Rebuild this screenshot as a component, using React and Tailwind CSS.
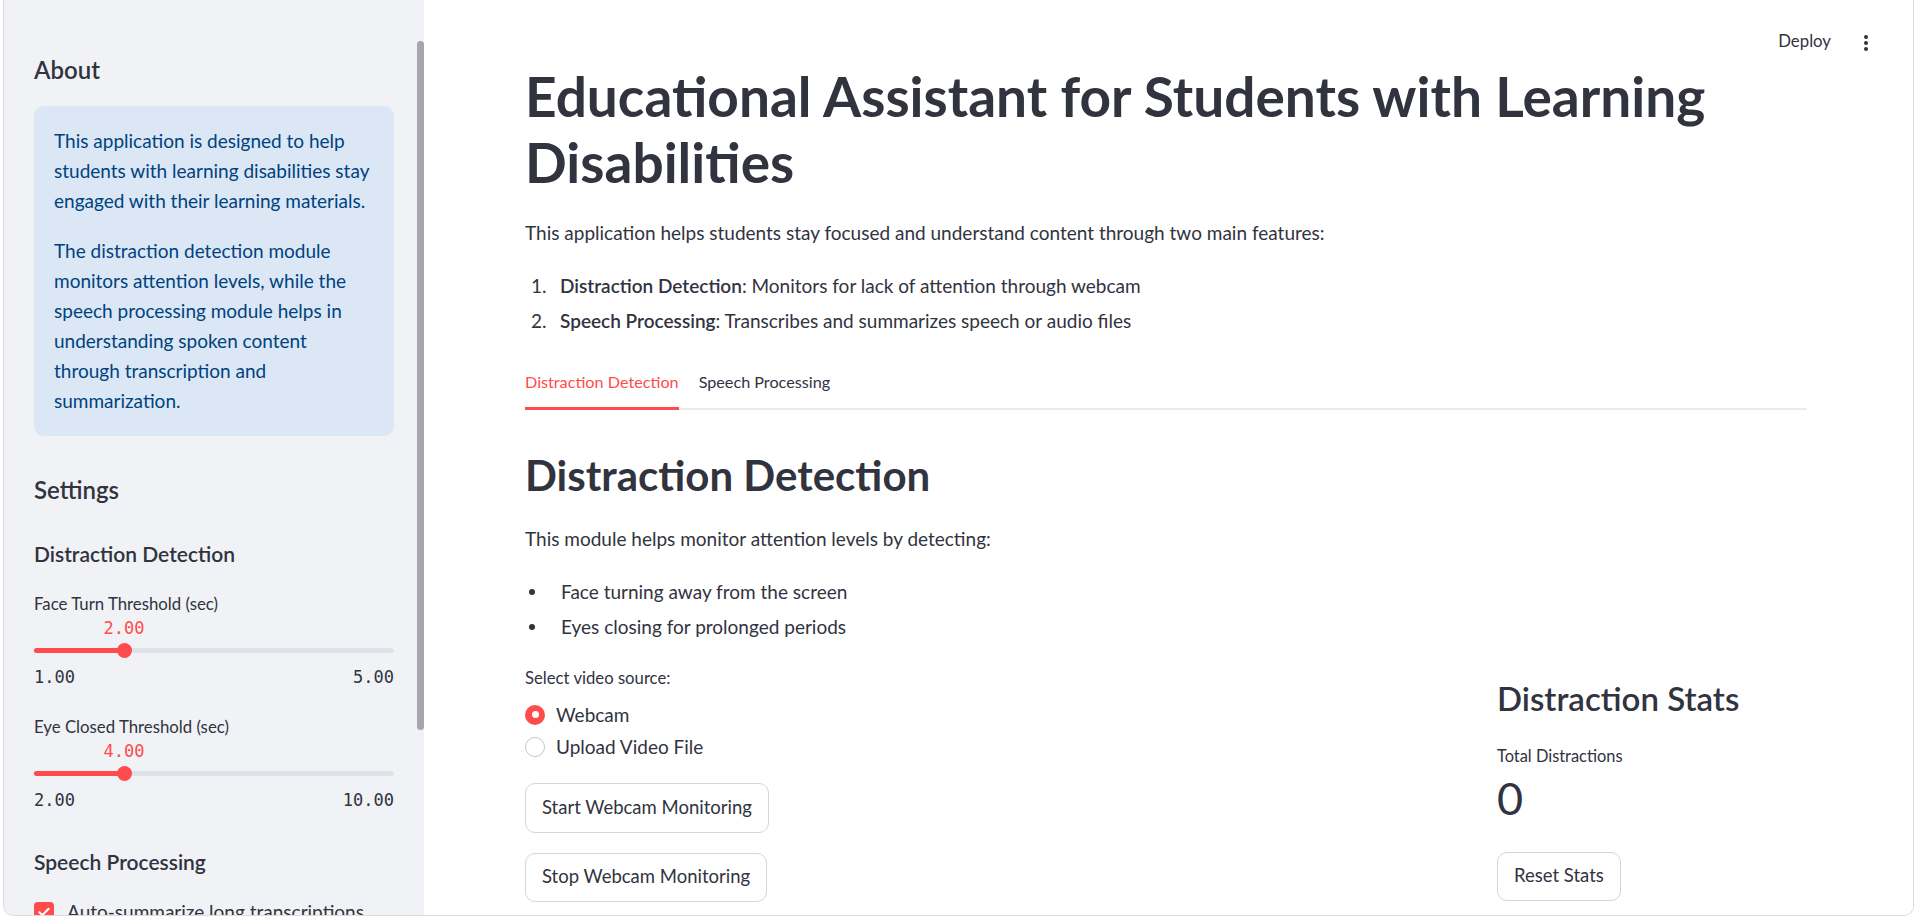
import React from "react";

const SANS = "[font-family:Lato,'Noto_Sans',sans-serif]";
const MONO = "[font-family:'DejaVu_Sans_Mono',monospace]";

function Slider({ label, value, min, max, pct }) {
  return (
    <div>
      <div className="text-[16.8px] leading-[21px] text-[#31333f]">{label}</div>
      <div className="relative h-[53.3px]">
        <div className="absolute left-0 right-0 top-[33.8px] h-[5px] rounded-full bg-[#dfe2e9]" />
        <div
          className="absolute left-0 top-[33.8px] h-[5px] rounded-full bg-[#ff4b4b]"
          style={{ width: pct }}
        />
        <div
          className="absolute top-[28.8px] -ml-[7.5px] h-[15px] w-[15px] rounded-full bg-[#ff4b4b]"
          style={{ left: pct }}
        />
        <div
          className={`absolute top-[4.3px] -translate-x-1/2 ${MONO} text-[17px] leading-[20px] text-[#ff4b4b]`}
          style={{ left: pct }}
        >
          {value}
        </div>
      </div>
      <div className={`flex justify-between ${MONO} text-[17px] leading-[20px] text-[#31333f]`}>
        <span>{min}</span>
        <span>{max}</span>
      </div>
    </div>
  );
}

function Sidebar() {
  return (
    <aside className="relative h-full w-[420px] shrink-0 bg-[#f0f2f6]">
      <div className="px-[30px] pt-[55.3px]">
        <h3 className="text-[24px] font-semibold leading-[30px] text-[#31333f]">About</h3>
        <div className="mt-[20.7px] whitespace-nowrap rounded-[10px] bg-[#dbe7f4] p-[20px] text-[19px] leading-[30px] text-[#004280]">
          <p>
            This application is designed to help
            <br />
            students with learning disabilities stay
            <br />
            engaged with their learning materials.
          </p>
          <p className="mt-[20px]">
            The distraction detection module
            <br />
            monitors attention levels, while the
            <br />
            speech processing module helps in
            <br />
            understanding spoken content
            <br />
            through transcription and
            <br />
            summarization.
          </p>
        </div>
        <h3 className="mt-[39.3px] text-[24px] font-semibold leading-[30px] text-[#31333f]">Settings</h3>
        <h4 className="mt-[34.5px] text-[21px] font-semibold leading-[27px] text-[#31333f]">
          Distraction Detection
        </h4>
        <div className="mt-[26px]">
          <Slider label="Face Turn Threshold (sec)" value="2.00" min="1.00" max="5.00" pct="25%" />
        </div>
        <div className="mt-[28.7px]">
          <Slider label="Eye Closed Threshold (sec)" value="4.00" min="2.00" max="10.00" pct="25%" />
        </div>
        <h4 className="mt-[37.8px] text-[21px] font-semibold leading-[27px] text-[#31333f]">
          Speech Processing
        </h4>
        <div className="mt-[22px] flex h-[30px] items-center gap-[13px]">
          <span className="flex h-[20px] w-[20px] items-center justify-center rounded-[4px] bg-[#ff4b4b]">
            <svg width="14" height="14" viewBox="0 0 24 24" fill="none" stroke="white" strokeWidth="3.5" strokeLinecap="round" strokeLinejoin="round">
              <path d="M4 12.5l5 5L20 6.5" />
            </svg>
          </span>
          <span className="whitespace-nowrap text-[19px] leading-[30px] text-[#31333f]">Auto-summarize long transcriptions</span>
        </div>
      </div>
      <div className="absolute right-0 top-[41px] h-[689px] w-[7px] rounded-full bg-[#a6a6ae]" />
    </aside>
  );
}

function Button({ children }) {
  return (
    <button className="flex items-center whitespace-nowrap rounded-[10px] border border-[#d5d5d9] bg-white px-[16px] text-[18.5px] text-[#31333f]">
      {children}
    </button>
  );
}

function Main() {
  return (
    <main className="relative h-full flex-1 bg-white pl-[101px] pr-[106px] pt-[63px] text-[#31333f]">
      <div className="absolute right-[45px] top-[29.7px] flex items-center gap-[33px]">
        <span className="text-[16.8px] leading-[21px] text-[#31333f]">Deploy</span>
        <svg width="4" height="16" viewBox="0 0 4 16" className="mt-[5px]">
          <circle cx="2" cy="2" r="2" fill="#31333f" />
          <circle cx="2" cy="8" r="2" fill="#31333f" />
          <circle cx="2" cy="14" r="2" fill="#31333f" />
        </svg>
      </div>

      <h1 className="text-[55px] font-bold leading-[66px] text-[#31333f]">
        Educational Assistant for Students with Learning
        <br />
        Disabilities
      </h1>
      <p className="mt-[22px] text-[19px] leading-[32px]">
        This application helps students stay focused and understand content through two main features:
      </p>
      <ol className="mt-[19px] text-[19px] leading-[35px]">
        <li className="flex">
          <span className="ml-[6px] w-[29px]">1.</span>
          <span>
            <b className="font-semibold">Distraction Detection</b>: Monitors for lack of attention through webcam
          </span>
        </li>
        <li className="flex">
          <span className="ml-[6px] w-[29px]">2.</span>
          <span>
            <b className="font-semibold">Speech Processing</b>: Transcribes and summarizes speech or audio files
          </span>
        </li>
      </ol>

      <div className="relative mt-[32.7px] flex gap-[20px]">
        <div className="absolute bottom-0 left-0 right-0 h-[2px] bg-[#ebebec]" />
        <div className="relative pb-[18px] text-[16.2px] leading-[21px] text-[#ff4b4b]">
          Distraction Detection
          <div className="absolute bottom-0 left-0 right-0 h-[3px] bg-[#ff4b4b]" />
        </div>
        <div className="relative pb-[18px] text-[16.2px] leading-[21px] text-[#31333f]">Speech Processing</div>
      </div>

      <h2 className="mt-[38.6px] text-[42px] font-bold leading-[54px]">Distraction Detection</h2>
      <p className="mt-[20.7px] text-[19px] leading-[32px]">This module helps monitor attention levels by detecting:</p>
      <ul className="mt-[19.5px] text-[19px] leading-[35px]">
        <li className="flex items-center">
          <span className="ml-[4px] mr-[26px] h-[6px] w-[6px] rounded-full bg-[#31333f]" />
          <span>Face turning away from the screen</span>
        </li>
        <li className="flex items-center">
          <span className="ml-[4px] mr-[26px] h-[6px] w-[6px] rounded-full bg-[#31333f]" />
          <span>Eyes closing for prolonged periods</span>
        </li>
      </ul>

      <div className="mt-[19.4px] flex">
        <div className="flex-1">
          <div className="text-[16.7px] leading-[28px]">Select video source:</div>
          <div className="mt-[8px] flex flex-col gap-[2px]">
            <div className="flex h-[30px] items-center gap-[11px]">
              <span className="flex h-[20px] w-[20px] items-center justify-center rounded-full bg-[#ff4b4b]">
                <span className="h-[7px] w-[7px] rounded-full bg-white" />
              </span>
              <span className="text-[19px] leading-[30px]">Webcam</span>
            </div>
            <div className="flex h-[30px] items-center gap-[11px]">
              <span className="h-[20px] w-[20px] rounded-full border-[1.5px] border-[#c4c4c8] bg-white" />
              <span className="text-[19px] leading-[30px]">Upload Video File</span>
            </div>
          </div>
          <div className="mt-[20.8px] flex">
            <div className="flex h-[50px]">
              <Button>Start Webcam Monitoring</Button>
            </div>
          </div>
          <div className="mt-[20px] flex">
            <div className="flex h-[49px]">
              <Button>Stop Webcam Monitoring</Button>
            </div>
          </div>
        </div>
        <div className="w-[310px] shrink-0 pt-[13.3px]">
          <h3 className="text-[33px] font-semibold leading-[42px]">Distraction Stats</h3>
          <div className="mt-[26.2px] text-[16.4px] leading-[21px]">Total Distractions</div>
          <div className="mt-[4.9px] text-[45px] leading-[54px]">0</div>
          <div className="mt-[26.4px] flex">
            <div className="flex h-[49px]">
              <Button>Reset Stats</Button>
            </div>
          </div>
        </div>
      </div>
    </main>
  );
}

export default function App() {
  return (
    <div className={`h-[920px] w-[1918px] overflow-hidden bg-white ${SANS}`}>
      <div className="ml-[3px] flex h-[916px] w-[1911px] overflow-hidden rounded-b-[10px] border-x border-b border-[#dcdcdf]">
        <Sidebar />
        <Main />
      </div>
    </div>
  );
}
